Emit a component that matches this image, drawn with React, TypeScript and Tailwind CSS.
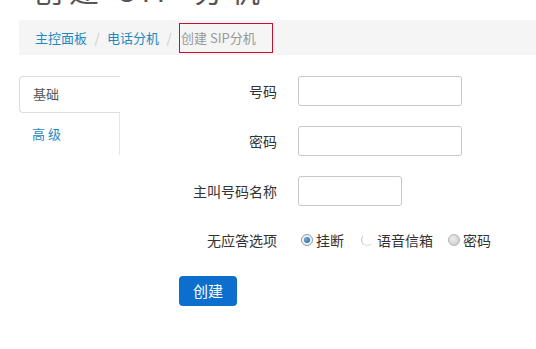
import React from "react";

const font = "font-['Noto_Sans_CJK_SC','Noto_Sans',sans-serif]";

function Radio({ kind }: { kind: "on" | "faint" | "off" }) {
  if (kind === "on") {
    return (
      <span className="w-[12px] h-[12px] rounded-full border border-[#8b9aa6] bg-[#eef2f5] flex items-center justify-center">
        <span className="w-[6px] h-[6px] rounded-full bg-[radial-gradient(circle_at_35%_35%,#6fa8d8,#1d5f9c)]" />
      </span>
    );
  }
  if (kind === "faint") {
    return <span className="w-[12px] h-[12px] rounded-full border border-transparent border-l-[#c9c9c9] border-b-[#dedede] bg-white" />;
  }
  return <span className="w-[12px] h-[12px] rounded-full border border-[#b5b5b5] bg-[radial-gradient(circle_at_40%_40%,#eeeeee,#c4c4c4)]" />;
}

function Field({ label, width }: { label: string; width: string }) {
  return (
    <div className="flex items-center h-[30px]">
      <label className="w-[157px] text-right text-[14px] text-[#333]">{label}</label>
      <input className={`ml-[21px] h-[30px] ${width} border border-[#c8c8c8] rounded-[3px] bg-white outline-none`} />
    </div>
  );
}

export default function App() {
  return (
    <div className={`w-[536px] h-[349px] overflow-hidden bg-white ${font}`}>
      {/* page title, scrolled off the top except its last pixels */}
      <h1 className="h-[5px] overflow-hidden pl-[33px]">
        <div className="-mt-[27px] text-[30px] leading-[32px] text-[#555] tracking-[6px] whitespace-nowrap">
          创建 SIP 分机
        </div>
      </h1>

      <nav className="mt-[15px] ml-[19px] h-[35px] bg-[#f5f5f5] flex items-center pl-4 text-[13px]">
        <span className="text-[#1e88c0]">主控面板</span>
        <span className="w-[20px] text-center text-[#ccc]">/</span>
        <span className="text-[#1e88c0]">电话分机</span>
        <span className="w-[20px] text-center text-[#ccc]">/</span>
        <span className="w-[94px] h-[30px] border border-[#c8102e] pl-[1px] leading-[27px] text-[#999]">创建 SIP分机</span>
      </nav>

      <div className="mt-[21px] flex">
        {/* tabs */}
        <div className="ml-[19px] w-[101px] flex flex-col text-[13px]">
          <div className="h-[37px] border border-r-0 border-[#ddd] rounded-l-[4px] flex items-center pl-[13px] pb-[1px] text-[#555] bg-white">
            基础
          </div>
          <div className="h-[42px] border-r border-[#e5e5e5] flex items-center pl-[13px] text-[#1e88c0] tracking-[3px]">
            高级
          </div>
        </div>

        {/* form */}
        <div className="flex flex-col gap-5">
          <Field label="号码" width="w-[164px]" />
          <Field label="密码" width="w-[164px]" />
          <Field label="主叫号码名称" width="w-[104px]" />
          <div className="flex items-center h-[30px] -mt-[1px] mb-[1px]">
            <span className="w-[157px] text-right text-[14px] text-[#333]">无应答选项</span>
            <div className="ml-[24px] flex items-center text-[14px] text-[#333]">
              <Radio kind="on" />
              <span className="ml-[3px]">挂断</span>
              <span className="ml-[17px]" />
              <Radio kind="faint" />
              <span className="ml-[4px]">语音信箱</span>
              <span className="ml-[15px]" />
              <Radio kind="off" />
              <span className="ml-[3px]">密码</span>
            </div>
          </div>
          <div className="pl-[59px]">
            <button className="w-[58px] h-[30px] rounded-[4px] bg-[#0d6fcd] text-white text-[15px]">创建</button>
          </div>
        </div>
      </div>
    </div>
  );
}
